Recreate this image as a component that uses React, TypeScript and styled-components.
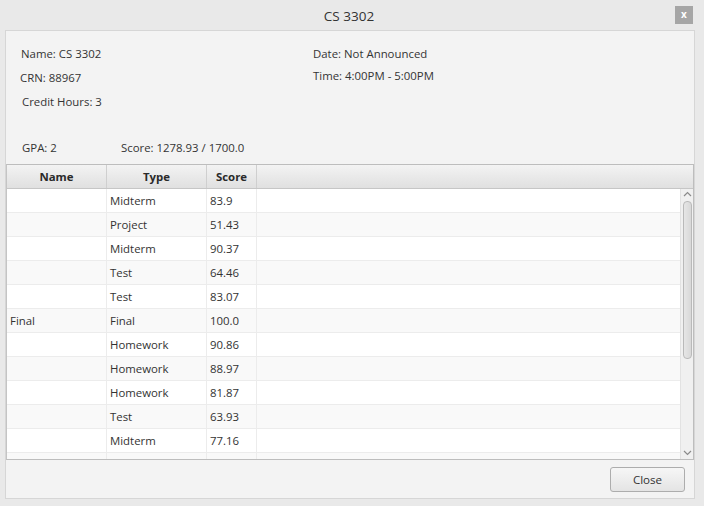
import React from "react";
import styled, { createGlobalStyle } from "styled-components";

type Mark = { name: string; type: string; score: string };

const marks: Mark[] = [
  { name: "", type: "Midterm", score: "83.9" },
  { name: "", type: "Project", score: "51.43" },
  { name: "", type: "Midterm", score: "90.37" },
  { name: "", type: "Test", score: "64.46" },
  { name: "", type: "Test", score: "83.07" },
  { name: "Final", type: "Final", score: "100.0" },
  { name: "", type: "Homework", score: "90.86" },
  { name: "", type: "Homework", score: "88.97" },
  { name: "", type: "Homework", score: "81.87" },
  { name: "", type: "Test", score: "63.93" },
  { name: "", type: "Midterm", score: "77.16" },
  { name: "", type: "", score: "" },
];

const GlobalStyle = createGlobalStyle`
  html, body {
    margin: 0;
    padding: 0;
    background: #e9e9e9;
  }
  * { box-sizing: border-box; }
`;

const Window = styled.div`
  width: 704px;
  height: 506px;
  display: flex;
  flex-direction: column;
  background: #e9e9e9;
  font-family: "Open Sans", "Noto Sans", sans-serif;
  font-size: 11.4px;
  color: #333;
  overflow: hidden;
`;

const TitleBar = styled.div`
  height: 30px;
  display: grid;
  grid-template-columns: 1fr auto 1fr;
  align-items: center;
  padding: 0 11px 0 5px;
`;

const Title = styled.div`
  grid-column: 2;
  font-size: 13.5px;
  color: #333;
  padding-top: 1px;
`;

const CloseX = styled.div`
  grid-column: 3;
  justify-self: end;
  width: 18px;
  height: 18px;
  background: #a6a6a6;
  color: #fff;
  font-size: 10px;
  font-weight: 700;
  display: flex;
  align-items: center;
  justify-content: center;
  line-height: 1;
  padding-bottom: 2px;
`;

const Panel = styled.div`
  margin: 0 9px 7px 5px;
  flex: 1;
  display: flex;
  flex-direction: column;
  background: #f3f3f3;
  border: 1px solid #d6d6d6;
`;

const Info = styled.div`
  display: grid;
  grid-template-columns: 292px 1fr;
  padding: 11px 0 0 15px;
  height: 99px;
`;

const InfoCol = styled.div`
  display: flex;
  flex-direction: column;
`;

const InfoLine = styled.div<{ $shift?: number; $lift?: number }>`
  height: 24px;
  line-height: 24px;
  margin-left: ${(p) => p.$shift ?? 0}px;
  margin-top: ${(p) => -(p.$lift ?? 0)}px;
  white-space: nowrap;
`;

const Summary = styled.div`
  display: flex;
  height: 34px;
  align-items: center;
  padding: 0 0 0 16px;
`;

const SummaryItem = styled.div<{ $w?: number }>`
  width: ${(p) => (p.$w ? `${p.$w}px` : "auto")};
  white-space: nowrap;
`;

const Table = styled.div`
  height: 296px;
  border: 1px solid #bdbdbd;
  border-left-color: #c4c4c4;
  display: flex;
  flex-direction: column;
  background: #fff;
`;

const Cols = "100px 100px 50px 1fr";

const HeaderRow = styled.div`
  display: grid;
  grid-template-columns: ${Cols};
  height: 24px;
  background: linear-gradient(#f3f3f3, #e0e0e0);
  border-bottom: 1px solid #c6c6c6;
  flex-shrink: 0;
`;

const HeadCell = styled.div`
  display: flex;
  align-items: center;
  justify-content: center;
  font-weight: 700;
  color: #2a2a2a;
  border-right: 1px solid #cfcfcf;
  &:last-child { border-right: none; }
`;

const Body = styled.div`
  flex: 1;
  display: flex;
  overflow: hidden;
`;

const Rows = styled.div`
  flex: 1;
  overflow: hidden;
`;

const Row = styled.div<{ $odd: boolean }>`
  display: grid;
  grid-template-columns: ${Cols};
  height: 24px;
  background: ${(p) => (p.$odd ? "#f9f9f9" : "#ffffff")};
  border-bottom: 1px solid #ececec;
`;

const Cell = styled.div`
  display: flex;
  align-items: center;
  padding-left: 3px;
  border-right: 1px solid #ececec;
  white-space: nowrap;
  &:last-child { border-right: none; }
`;

const ScrollBar = styled.div`
  width: 13px;
  background: #f0f0f0;
  border-left: 1px solid #e2e2e2;
  display: flex;
  flex-direction: column;
  align-items: center;
  padding: 2px 0 3px;
`;

const Arrow = styled.svg`
  width: 9px;
  height: 6px;
  flex-shrink: 0;
`;

const Thumb = styled.div`
  width: 9px;
  height: 158px;
  margin: 4px 0 auto;
  border: 1px solid #b9b9b9;
  border-radius: 4px;
  background: linear-gradient(90deg, #e6e6e6, #d8d8d8);
`;

const Footer = styled.div`
  flex: 1;
  display: flex;
  justify-content: flex-end;
  align-items: flex-start;
  padding: 7px 9px 0 0;
`;

const Button = styled.button`
  width: 75px;
  height: 25px;
  border: 1px solid #adadad;
  border-radius: 3px;
  background: linear-gradient(#f6f6f6, #e4e4e4);
  font-family: inherit;
  font-size: 11.6px;
  color: #333;
  padding: 0;
`;

export default function App() {
  return (
    <>
      <GlobalStyle />
      <Window>
        <TitleBar>
          <Title>CS 3302</Title>
          <CloseX>x</CloseX>
        </TitleBar>
        <Panel>
          <Info>
            <InfoCol>
              <InfoLine>Name: CS 3302</InfoLine>
              <InfoLine $shift={-1}>CRN: 88967</InfoLine>
              <InfoLine $shift={1}>Credit Hours: 3</InfoLine>
            </InfoCol>
            <InfoCol>
              <InfoLine>Date: Not Announced</InfoLine>
              <InfoLine $lift={2}>Time: 4:00PM - 5:00PM</InfoLine>
            </InfoCol>
          </Info>
          <Summary>
            <SummaryItem $w={99}>GPA: 2</SummaryItem>
            <SummaryItem>Score: 1278.93 / 1700.0</SummaryItem>
          </Summary>
          <Table>
            <HeaderRow>
              <HeadCell>Name</HeadCell>
              <HeadCell>Type</HeadCell>
              <HeadCell>Score</HeadCell>
              <HeadCell />
            </HeaderRow>
            <Body>
              <Rows>
                {marks.map((m, i) => (
                  <Row key={i} $odd={i % 2 === 1}>
                    <Cell>{m.name}</Cell>
                    <Cell>{m.type}</Cell>
                    <Cell>{m.score}</Cell>
                    <Cell />
                  </Row>
                ))}
              </Rows>
              <ScrollBar>
                <Arrow viewBox="0 0 9 6">
                  <path d="M1 5 L4.5 1.5 L8 5" fill="none" stroke="#8a8a8a" strokeWidth="1.2" />
                </Arrow>
                <Thumb />
                <Arrow viewBox="0 0 9 6">
                  <path d="M1 1 L4.5 4.5 L8 1" fill="none" stroke="#8a8a8a" strokeWidth="1.2" />
                </Arrow>
              </ScrollBar>
            </Body>
          </Table>
          <Footer>
            <Button>Close</Button>
          </Footer>
        </Panel>
      </Window>
    </>
  );
}
